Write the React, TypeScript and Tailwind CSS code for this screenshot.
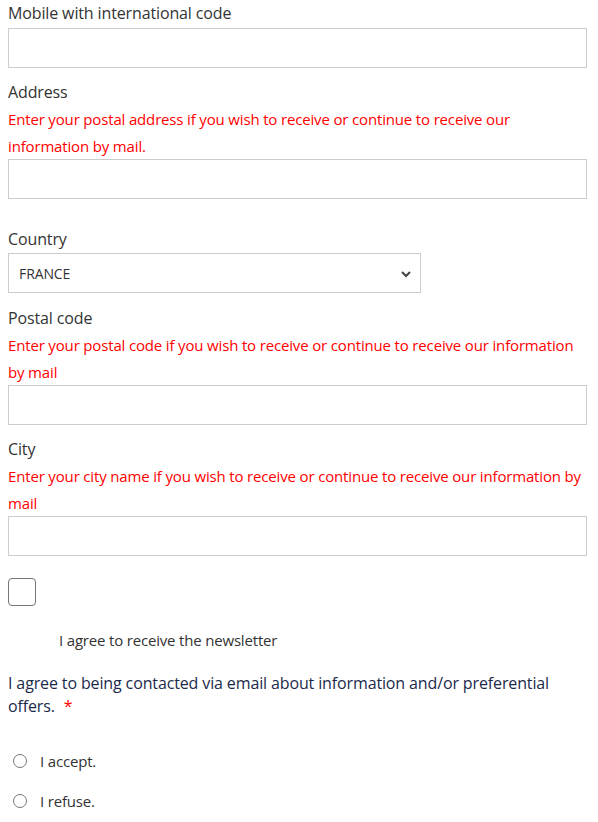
import React from "react";

const Label = ({ children, className = "" }: { children: React.ReactNode; className?: string }) => (
  <div className={"text-[16px] leading-[24px] tracking-[-0.13px] text-[#333333] " + className}>{children}</div>
);

const Hint = ({ children }: { children: React.ReactNode }) => (
  <div className="pt-[2px] h-[54px] text-[15px] leading-[27px] tracking-[-0.16px] text-[#ff0000]">{children}</div>
);

const Input = ({ className = "" }: { className?: string }) => (
  <div className={"h-[40px] w-[579px] border border-[#cccccc] bg-white " + className} />
);

export default function App() {
  return (
    <div className="bg-white w-[598px] h-[822px] overflow-hidden pl-[8px]" style={{ fontFamily: '"Open Sans", sans-serif' }}>
      <Label className="pt-[1px]">Mobile with international code</Label>
      <Input className="mt-[3px]" />

      <Label className="mt-[12px]">Address</Label>
      <Hint>
        Enter your postal address if you wish to receive or continue to receive our
        <br />
        information by mail.
      </Hint>
      <Input className="mt-[1px]" />

      <Label className="mt-[28px]">Country</Label>
      <div className="mt-[2px] h-[40px] w-[413px] border border-[#cccccc] flex items-center justify-between pl-[10px] pr-[8px]">
        <span className="text-[14px] tracking-[-0.1px] text-[#333333]">FRANCE</span>
        <svg width="12" height="8" viewBox="0 0 12 8" className="mt-[1px]">
          <path d="M2 2 L6 6 L10 2" fill="none" stroke="#444" strokeWidth="2" />
        </svg>
      </div>

      <Label className="mt-[13px]">Postal code</Label>
      <Hint>
        Enter your postal code if you wish to receive or continue to receive our information
        <br />
        by mail
      </Hint>
      <Input className="mt-[1px]" />

      <Label className="mt-[12px]">City</Label>
      <Hint>
        Enter your city name if you wish to receive or continue to receive our information by
        <br />
        mail
      </Hint>
      <Input className="mt-[1px]" />

      <div className="mt-[22px] h-[28px] w-[28px] rounded-[4px] border border-[#767676]" />
      <div className="mt-[22px] pl-[51px] text-[15px] leading-[24px] tracking-[-0.18px] text-[#333333]">I agree to receive the newsletter</div>

      <div className="mt-[20px] text-[16px] leading-[23px] tracking-[-0.13px] text-[#1b2a4b] pr-[20px]">
        I agree to being contacted via email about information and/or preferential offers.
        <span className="text-[#ff0000] ml-[9px]">*</span>
      </div>

      <div className="mt-[31px] flex flex-col gap-[16px]">
        <div className="flex items-center h-[24px]">
          <span className="ml-[5px] w-[14px] h-[14px] rounded-full border border-[#767676]" />
          <span className="ml-[13px] text-[15px] tracking-[-0.18px] text-[#333333]">I accept.</span>
        </div>
        <div className="flex items-center h-[24px]">
          <span className="ml-[5px] w-[14px] h-[14px] rounded-full border border-[#767676]" />
          <span className="ml-[13px] text-[15px] tracking-[-0.18px] text-[#333333]">I refuse.</span>
        </div>
      </div>
    </div>
  );
}
